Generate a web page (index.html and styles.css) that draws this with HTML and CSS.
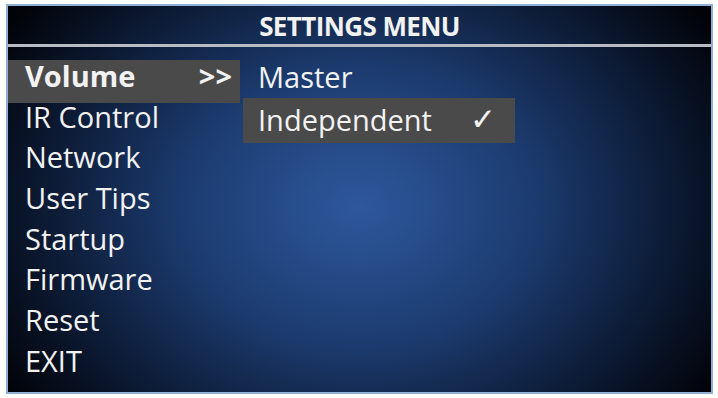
FILE: index.html
```
<!DOCTYPE html>
<html lang="en">

<head>
  <meta charset="UTF-8">
  <meta name="viewport" content="width=device-width, initial-scale=1.0">
  <title>Settings Menu</title>
  <link rel="stylesheet" href="styles.css">
</head>

<body>
  <div class="screen">
    <div class="title">SETTINGS MENU</div>
    <div class="menus">
      <div class="menu">
        <div class="item active"><span>Volume</span><span class="more">&gt;&gt;</span></div>
        <div class="item">IR Control</div>
        <div class="item">Network</div>
        <div class="item">User Tips</div>
        <div class="item">Startup</div>
        <div class="item">Firmware</div>
        <div class="item">Reset</div>
        <div class="item">EXIT</div>
      </div>
      <div class="submenu">
        <div class="item">Master</div>
        <div class="item active"><span>Independent</span><span class="check">&#10003;</span></div>
      </div>
    </div>
  </div>
</body>

</html>
```

FILE: styles.css
```
:root {
  --color-border: #8fb0d4;
  --color-select: #4a4a4b;
  --color-text: #f2f2f2;
}

html,
body {
  margin: 0;
  background: #fff;
}

body {
  padding: 4px 5px 2px 6px;
  font-family: "Open Sans", "Lato", sans-serif;
  color: var(--color-text);
}

.screen {
  height: 386px;
  border: 2px solid var(--color-border);
  background: radial-gradient(ellipse 420px 330px at 50% 52%,
      #2e589c 0%,
      #1d3d72 40%,
      #0c1a33 75%,
      #020308 100%);
}

.title {
  height: 38px;
  line-height: 41px;
  text-align: center;
  font-size: 26px;
  font-weight: bold;
  letter-spacing: -0.6px;
  border-bottom: 3px solid #b7bcc4;
}

.menus {
  display: flex;
  padding-top: 9px;
  font-size: 29px;
}

.menu {
  width: 232px;

  & .item {
    height: 40.7px;
    line-height: 40.7px;
    padding: 0 8px 0 17px;
  }

  /* the bar sits a little high and runs into the next row */
  & .active {
    display: flex;
    justify-content: space-between;
    margin: 4px 0 -6.3px;
    height: 43px;
    line-height: 32px;
    font-weight: bold;
    background: var(--color-select);
  }
}

.submenu {
  width: 272px;
  margin-left: 3px;

  & .item {
    height: 42px;
    line-height: 42px;
    padding: 0 15px;
  }

  & .active {
    display: flex;
    justify-content: space-between;
    height: 45px;
    line-height: 43px;
    padding-right: 19px;
    background: var(--color-select);
  }
}

.check {
  font-family: "DejaVu Sans", sans-serif;
  font-size: 31px;
  font-weight: bold;
}
```
